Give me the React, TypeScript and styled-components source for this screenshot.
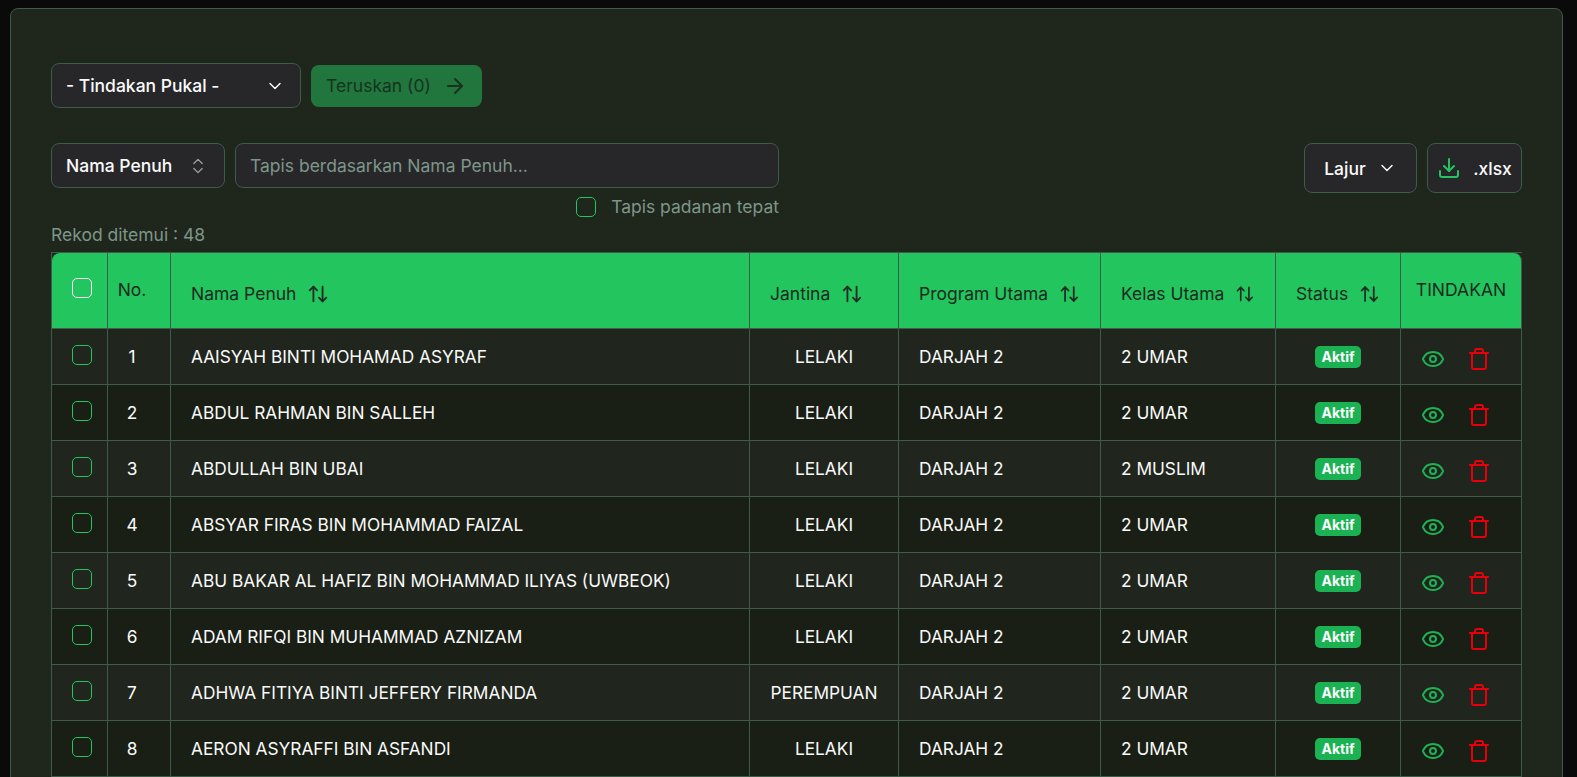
import React from "react";
import styled, { createGlobalStyle } from "styled-components";
import { ArrowRight, ArrowUpDown, ChevronDown, ChevronsUpDown, Download, Eye, Trash } from "lucide-react";

const students = [
  { no: 1, name: "AAISYAH BINTI MOHAMAD ASYRAF", gender: "LELAKI", program: "DARJAH 2", kelas: "2 UMAR" },
  { no: 2, name: "ABDUL RAHMAN BIN SALLEH", gender: "LELAKI", program: "DARJAH 2", kelas: "2 UMAR" },
  { no: 3, name: "ABDULLAH BIN UBAI", gender: "LELAKI", program: "DARJAH 2", kelas: "2 MUSLIM" },
  { no: 4, name: "ABSYAR FIRAS BIN MOHAMMAD FAIZAL", gender: "LELAKI", program: "DARJAH 2", kelas: "2 UMAR" },
  { no: 5, name: "ABU BAKAR AL HAFIZ BIN MOHAMMAD ILIYAS (UWBEOK)", gender: "LELAKI", program: "DARJAH 2", kelas: "2 UMAR" },
  { no: 6, name: "ADAM RIFQI BIN MUHAMMAD AZNIZAM", gender: "LELAKI", program: "DARJAH 2", kelas: "2 UMAR" },
  { no: 7, name: "ADHWA FITIYA BINTI JEFFERY FIRMANDA", gender: "PEREMPUAN", program: "DARJAH 2", kelas: "2 UMAR" },
  { no: 8, name: "AERON ASYRAFFI BIN ASFANDI", gender: "LELAKI", program: "DARJAH 2", kelas: "2 UMAR" },
];

export default function App() {
  return (
    <>
      <GlobalStyle />
      <Card>
        <BulkRow>
          <SelectBox $width={250}>
            - Tindakan Pukal -
            <ChevronDown size={20} strokeWidth={1.75} />
          </SelectBox>
          <ProceedButton>
            Teruskan (0)
            <ArrowRight size={24} />
          </ProceedButton>
        </BulkRow>

        <FilterRow>
          <FilterLeft>
            <FilterInputs>
              <SelectBox $width={174}>
                Nama Penuh
                <MutedIcon>
                  <ChevronsUpDown size={20} strokeWidth={1.5} />
                </MutedIcon>
              </SelectBox>
              <SearchInput placeholder="Tapis berdasarkan Nama Penuh..." />
            </FilterInputs>
            <ExactMatch>
              <Check />
              Tapis padanan tepat
            </ExactMatch>
          </FilterLeft>
          <FilterRight>
            <ColumnButton>
              Lajur
              <ChevronDown size={20} strokeWidth={1.75} />
            </ColumnButton>
            <ExportButton>
              <GreenIcon>
                <Download size={24} />
              </GreenIcon>
              .xlsx
            </ExportButton>
          </FilterRight>
        </FilterRow>

        <RecordCount>Rekod ditemui : 48</RecordCount>

        <Table>
          <colgroup>
            <col width={56} />
            <col width={63} />
            <col width={579} />
            <col width={149} />
            <col width={202} />
            <col width={175} />
            <col width={125} />
            <col width={121} />
          </colgroup>
          <thead>
            <tr>
              <Th>
                <HeadCheck />
              </Th>
              <NoTh>No.</NoTh>
              <Th>
                <SortLabel>
                  Nama Penuh <ArrowUpDown size={22} />
                </SortLabel>
              </Th>
              <Th>
                <SortLabel>
                  Jantina <ArrowUpDown size={22} />
                </SortLabel>
              </Th>
              <Th>
                <SortLabel>
                  Program Utama <ArrowUpDown size={22} />
                </SortLabel>
              </Th>
              <Th>
                <SortLabel>
                  Kelas Utama <ArrowUpDown size={22} />
                </SortLabel>
              </Th>
              <Th>
                <SortLabel $center>
                  Status <ArrowUpDown size={22} />
                </SortLabel>
              </Th>
              <Th $center>TINDAKAN</Th>
            </tr>
          </thead>
          <tbody>
            {students.map((s) => (
              <Tr key={s.no}>
                <Td>
                  <Check />
                </Td>
                <NoTd>{s.no}</NoTd>
                <Td>{s.name}</Td>
                <Td $center>{s.gender}</Td>
                <Td>{s.program}</Td>
                <Td>{s.kelas}</Td>
                <Td $center>
                  <Badge>Aktif</Badge>
                </Td>
                <Td>
                  <Actions>
                    <EyeIcon>
                      <Eye size={24} />
                    </EyeIcon>
                    <RedIcon>
                      <Trash size={24} />
                    </RedIcon>
                  </Actions>
                </Td>
              </Tr>
            ))}
          </tbody>
        </Table>
      </Card>
    </>
  );
}

const GlobalStyle = createGlobalStyle`
  html, body {
    margin: 0;
    height: 100%;
    overflow: hidden;
    background: #0a0a0a;
    font-family: Inter, "Liberation Sans", sans-serif;
    font-size: 17.5px;
    color: #fafafa;
  }
  * {
    box-sizing: border-box;
  }
`;

const Card = styled.div`
  margin: 8px 14px 0 10px;
  padding: 54px 40px 40px;
  background: #1f261c;
  border: 1px solid #3d5a4a;
  border-radius: 8px;
`;

const BulkRow = styled.div`
  display: flex;
  align-items: center;
  gap: 10px;
`;

const SelectBox = styled.div<{ $width: number }>`
  width: ${(p) => p.$width}px;
  height: 45px;
  padding: 0 15px 0 14px;
  display: flex;
  align-items: center;
  justify-content: space-between;
  flex-shrink: 0;
  background: #27272a;
  border: 1px solid #3d5a4a;
  border-radius: 8px;
  font-weight: 500;
`;

const MutedIcon = styled.span`
  display: inline-flex;
  margin-right: 1px;
  color: #a1a1aa;
`;

const ProceedButton = styled.button`
  width: 171px;
  height: 42px;
  display: flex;
  align-items: center;
  justify-content: center;
  gap: 12px;
  background: #21763d;
  border: none;
  border-radius: 8px;
  color: #17331f;
  font: inherit;
`;

const FilterRow = styled.div`
  margin-top: 35px;
  display: flex;
  justify-content: space-between;
  align-items: flex-start;
`;

const FilterLeft = styled.div`
  width: 728px;
`;

const FilterInputs = styled.div`
  display: flex;
  gap: 10px;
`;

const SearchInput = styled.input`
  flex: 1;
  height: 45px;
  padding: 0 14px;
  background: #27272a;
  border: 1px solid #3d5a4a;
  border-radius: 8px;
  color: #fafafa;
  font: inherit;
  &::placeholder {
    color: #7e9689;
    opacity: 1;
  }
`;

const ExactMatch = styled.label`
  margin-top: 8px;
  display: flex;
  justify-content: flex-end;
  align-items: center;
  gap: 15px;
  color: #7e9689;
`;

const FilterRight = styled.div`
  display: flex;
  gap: 10px;
`;

const ToolButton = styled.button`
  height: 50px;
  display: flex;
  align-items: center;
  justify-content: center;
  background: #27272a;
  border: 1px solid #3d5a4a;
  border-radius: 8px;
  color: #fafafa;
  font: inherit;
  font-weight: 500;
`;

const ColumnButton = styled(ToolButton)`
  width: 113px;
  gap: 11px;
`;

const ExportButton = styled(ToolButton)`
  width: 95px;
  gap: 12px;
`;

const GreenIcon = styled.span`
  display: inline-flex;
  color: #22c55e;
`;

const EyeIcon = styled(GreenIcon)`
  color: #1fb155;
`;

const RedIcon = styled.span`
  display: inline-flex;
  color: #e7000b;
`;

const RecordCount = styled.div`
  margin-top: 6px;
  height: 29px;
  line-height: 24px;
  color: #7e9689;
`;

const Table = styled.table`
  width: 1470px;
  table-layout: fixed;
  border-collapse: separate;
  border-spacing: 0;
  border-top: 1px solid #3d5a4a;
  border-left: 1px solid #3d5a4a;
`;

const Th = styled.th<{ $center?: boolean }>`
  height: 76px;
  padding: 0 20px;
  background: #22c55e;
  border-right: 1px solid #3d5a4a;
  border-bottom: 1px solid #3d5a4a;
  color: #1f2a22;
  font-weight: 400;
  text-align: ${(p) => (p.$center ? "center" : "left")};
  white-space: nowrap;
  &:first-child {
    border-top-left-radius: 8px;
    padding: 0;
    text-align: center;
  }
  &:last-child {
    border-top-right-radius: 8px;
    padding: 0 0 2px;
  }
`;

const NoTh = styled(Th)`
  padding: 0 14px 2px 0;
  text-align: center;
`;

const SortLabel = styled.div<{ $center?: boolean }>`
  display: flex;
  align-items: center;
  justify-content: ${(p) => (p.$center ? "center" : "flex-start")};
  gap: 11px;
  padding-top: 6px;
`;

const Tr = styled.tr`
  background: #1a1f16;
  &:nth-child(odd) {
    background: #20261e;
  }
`;

const Td = styled.td<{ $center?: boolean }>`
  height: 56px;
  padding: 0 20px;
  border-right: 1px solid #3d5a4a;
  border-bottom: 1px solid #3d5a4a;
  text-align: ${(p) => (p.$center ? "center" : "left")};
  white-space: nowrap;
  font-size: 17.3px;
  &:first-child {
    padding: 0 0 0 4px;
    text-align: center;
  }
`;

const NoTd = styled(Td)`
  padding: 0 14px 0 0;
  text-align: center;
`;

const Check = styled.input.attrs({ type: "checkbox" })`
  appearance: none;
  display: block;
  width: 20px;
  height: 20px;
  margin: 0;
  background: transparent;
  border: 1px solid #22c55e;
  border-radius: 5px;
  ${Td} & {
    margin: -4px auto 0;
  }
`;

const HeadCheck = styled(Check)`
  margin: -6px auto 0 20px;
  border-color: #fafafa;
`;

const Badge = styled.span`
  display: inline-block;
  padding: 2px 6px;
  background: #1bb254;
  border-radius: 5px;
  font-size: 14px;
  line-height: 18px;
  font-weight: 700;
`;

const Actions = styled.div`
  display: flex;
  gap: 22px;
  margin-top: 4px;
`;
